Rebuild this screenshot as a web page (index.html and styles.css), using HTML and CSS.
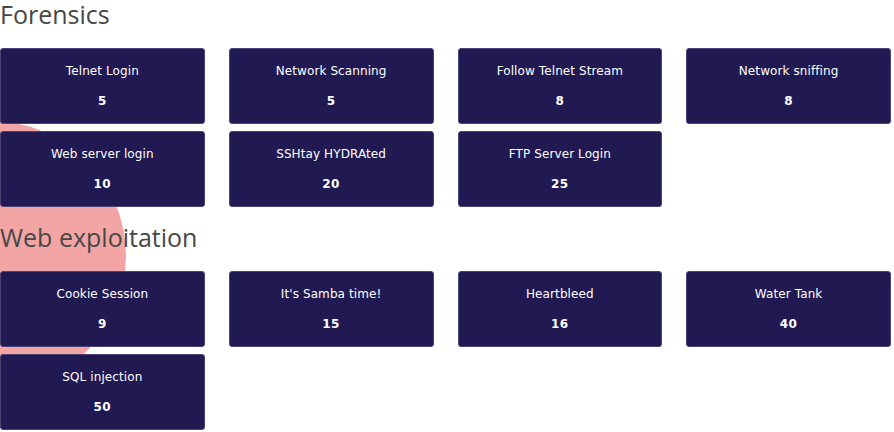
FILE: index.html
```html
<!DOCTYPE html>
<html>
<head>
<meta charset="utf-8">
<link rel="stylesheet" href="styles.css">
</head>
<body>
<div class="blob"></div>
<main class="page">
  <section class="category">
    <h2 class="cat-title">Forensics</h2>
    <div class="grid">
      <div class="card"><div class="card-name">Telnet Login</div><div class="card-points">5</div></div>
      <div class="card"><div class="card-name">Network Scanning</div><div class="card-points">5</div></div>
      <div class="card"><div class="card-name">Follow Telnet Stream</div><div class="card-points">8</div></div>
      <div class="card"><div class="card-name">Network sniffing</div><div class="card-points">8</div></div>
      <div class="card"><div class="card-name">Web server login</div><div class="card-points">10</div></div>
      <div class="card"><div class="card-name">SSHtay HYDRAted</div><div class="card-points">20</div></div>
      <div class="card"><div class="card-name">FTP Server Login</div><div class="card-points">25</div></div>
    </div>
  </section>
  <section class="category">
    <h2 class="cat-title">Web exploitation</h2>
    <div class="grid">
      <div class="card"><div class="card-name">Cookie Session</div><div class="card-points">9</div></div>
      <div class="card"><div class="card-name">It's Samba time!</div><div class="card-points">15</div></div>
      <div class="card"><div class="card-name">Heartbleed</div><div class="card-points">16</div></div>
      <div class="card"><div class="card-name">Water Tank</div><div class="card-points">40</div></div>
      <div class="card"><div class="card-name">SQL injection</div><div class="card-points">50</div></div>
    </div>
  </section>
</main>
</body>
</html>
```
FILE: styles.css
```css
html, body {
  margin: 0;
  padding: 0;
  background: #ffffff;
  overflow: hidden;
}
body {
  position: relative;
  width: 894px;
  height: 432px;
}
.blob {
  position: absolute;
  left: -144px;
  top: 121px;
  width: 270px;
  height: 270px;
  border-radius: 50%;
  background: #f3a5a5;
  z-index: 0;
}
.page {
  position: relative;
  z-index: 1;
  width: 891px;
}
.category + .category {
  margin-top: 16px;
}
.cat-title {
  margin: 0 0 20px 0;
  height: 28px;
  font-family: "Open Sans", "Liberation Sans", sans-serif;
  font-weight: 400;
  font-size: 25px;
  line-height: 28px;
  color: #474747;
}
.grid {
  display: grid;
  grid-template-columns: repeat(4, 1fr);
  column-gap: 24px;
  row-gap: 7px;
}
.card {
  box-sizing: border-box;
  height: 76px;
  background: #211952;
  border: 1px solid #4a4476;
  border-radius: 3px;
  display: flex;
  flex-direction: column;
  align-items: center;
  padding-top: 15px;
  color: #ffffff;
  font-family: "DejaVu Sans", "Liberation Sans", sans-serif;
}
.card-name {
  font-size: 12px;
  line-height: 14px;
  height: 14px;
  letter-spacing: 0.1px;
}
.card-points {
  margin-top: 16px;
  font-size: 12px;
  font-weight: 700;
  line-height: 14px;
  letter-spacing: 0.5px;
}
```
